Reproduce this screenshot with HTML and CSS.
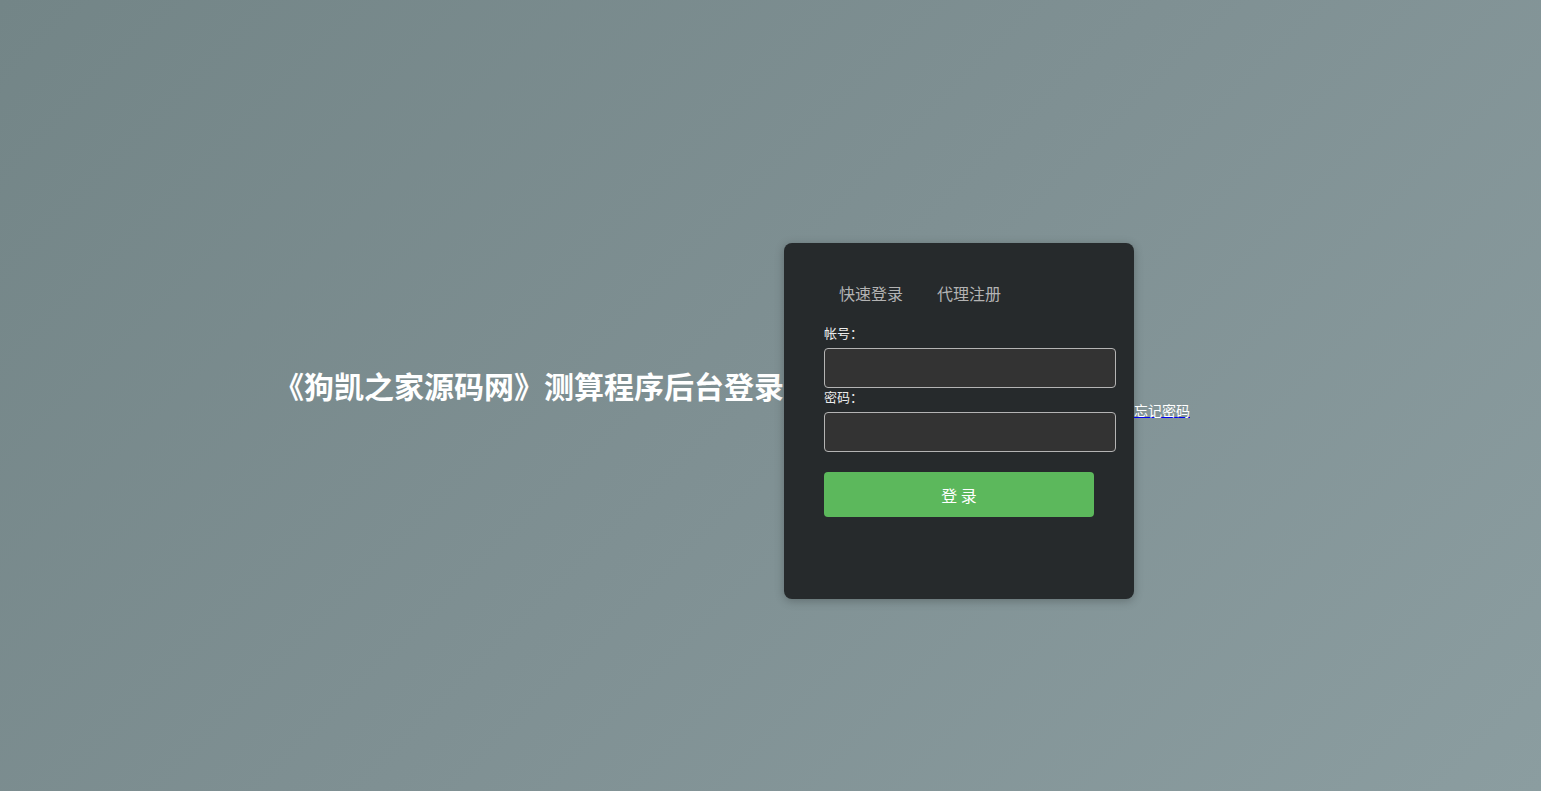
FILE: index.html
```html
<!DOCTYPE html>
<html lang="zh-CN">
<head>
<meta charset="utf-8">
<title>后台登录</title>
<link rel="stylesheet" href="styles.css">
</head>
<body>
<div class="page">
  <div class="row">
    <h1 class="title">《狗凯之家源码网》测算程序后台登录</h1>
    <div class="card">
      <div class="tabs">
        <span class="tab">快速登录</span>
        <span class="tab">代理注册</span>
      </div>
      <form class="form">
        <label class="label">帐号：</label>
        <input class="input" type="text">
        <label class="label label-second">密码：</label>
        <input class="input" type="password">
        <button class="btn" type="button">登 录</button>
      </form>
    </div>
    <a class="forgot" href="#">忘记密码</a>
  </div>
</div>
</body>
</html>
```
FILE: styles.css
```css
html, body {
  margin: 0;
  padding: 0;
  height: 100%;
}
body {
  font-family: "Noto Sans CJK SC", "Noto Sans", sans-serif;
  background: linear-gradient(135deg, #738587 0%, #7f9093 50%, #8b9da0 100%);
  overflow: hidden;
}
.page {
  height: 791px;
  padding-top: 243px;
  box-sizing: border-box;
}
.row {
  display: flex;
  align-items: flex-start;
  padding-left: 274px;
}
.title {
  margin: 121px 0 0 0;
  width: 510px;
  font-size: 30px;
  line-height: 43px;
  font-weight: bold;
  color: #ffffff;
  white-space: nowrap;
  overflow: hidden;
  letter-spacing: 0;
}
.card {
  width: 350px;
  height: 356px;
  box-sizing: border-box;
  background: #262a2c;
  border-radius: 8px;
  box-shadow: 0 2px 10px rgba(0, 0, 0, 0.25);
  padding: 39px 18px 0 40px;
}
.tabs {
  display: flex;
  gap: 4px;
  height: 22px;
}
.tab {
  padding: 0 15px;
  font-size: 16px;
  line-height: 22px;
  color: #b3b3b3;
}
.form {
  display: flex;
  flex-direction: column;
  margin-top: 19px;
}
.label {
  font-size: 13px;
  line-height: 20px;
  color: #ececec;
}
.label-second {
  margin-top: -1px;
}
.input {
  margin-top: 5px;
  width: 292px;
  height: 40px;
  box-sizing: border-box;
  background: #333333;
  border: 1px solid #b4b4b4;
  border-radius: 4px;
  color: #fff;
  padding: 0 8px;
  outline: none;
}
.btn {
  margin-top: 20px;
  width: 270px;
  height: 45px;
  background: #5cb85c;
  border: none;
  border-radius: 4px;
  color: #ffffff;
  font-family: "Noto Sans CJK SC", sans-serif;
  font-size: 16px;
}
.forgot {
  margin-top: 157px;
  font-size: 14px;
  line-height: 20px;
  color: #ffffff;
  text-decoration: underline;
  text-decoration-color: #0000ee;
}
```
